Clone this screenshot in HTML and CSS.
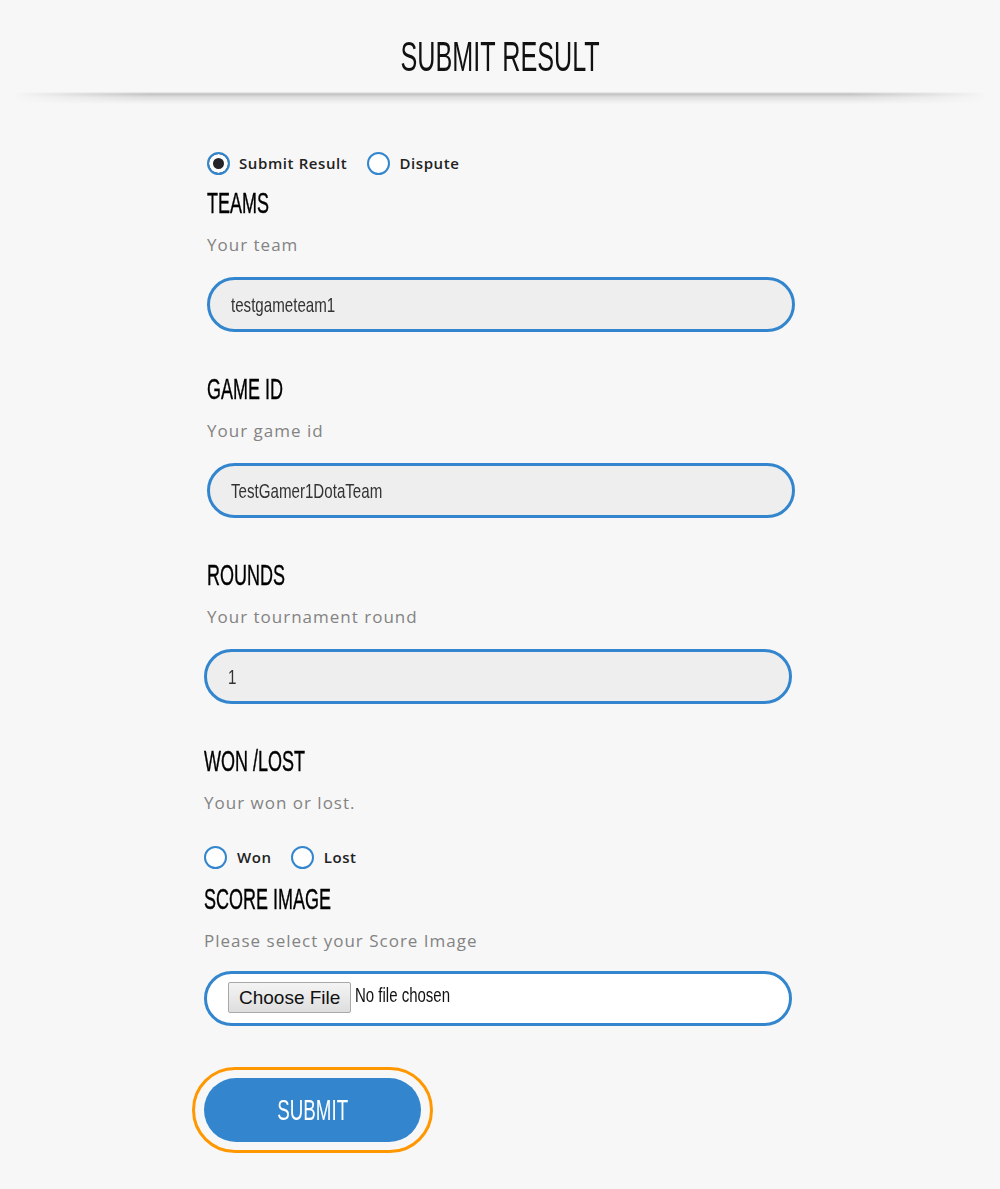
FILE: index.html
```html
<!DOCTYPE html>
<html lang="en">
<head>
<meta charset="utf-8">
<title>Submit Result</title>
<link rel="stylesheet" href="styles.css">
</head>
<body>
<header class="page-header">
  <h1 class="page-title"><span class="cond center">SUBMIT RESULT</span></h1>
</header>
<main class="form-wrap">
  <form class="result-form">
    <div class="radio-row first">
      <label class="radio"><input type="radio" name="mode" checked><span>Submit Result</span></label>
      <label class="radio"><input type="radio" name="mode"><span>Dispute</span></label>
    </div>

    <section class="field">
      <h2 class="field-title"><span class="cond">TEAMS</span></h2>
      <p class="field-desc">Your team</p>
      <div class="pill"><span class="cond value">testgameteam1</span></div>
    </section>

    <section class="field">
      <h2 class="field-title"><span class="cond">GAME ID</span></h2>
      <p class="field-desc">Your game id</p>
      <div class="pill"><span class="cond value">TestGamer1DotaTeam</span></div>
    </section>

    <section class="field">
      <h2 class="field-title"><span class="cond">ROUNDS</span></h2>
      <p class="field-desc">Your tournament round</p>
      <div class="pill pill-shifted"><span class="cond value">1</span></div>
    </section>

    <section class="field shifted">
      <h2 class="field-title"><span class="cond">WON /LOST</span></h2>
      <p class="field-desc">Your won or lost.</p>
      <div class="radio-row small">
        <label class="radio"><input type="radio" name="wl"><span>Won</span></label>
        <label class="radio"><input type="radio" name="wl"><span>Lost</span></label>
      </div>
    </section>

    <section class="field shifted score">
      <h2 class="field-title"><span class="cond">SCORE IMAGE</span></h2>
      <p class="field-desc">Please select your Score Image</p>
      <div class="pill file-pill">
        <span class="file-btn">Choose File</span>
        <span class="cond file-name">No file chosen</span>
      </div>
    </section>

    <div class="submit-wrap">
      <button type="button" class="submit-btn"><span class="cond center">SUBMIT</span></button>
    </div>
  </form>
</main>
</body>
</html>
```

FILE: styles.css
```css
* { box-sizing: border-box; }

html, body {
  margin: 0;
  padding: 0;
  background: #f7f7f7;
}

body {
  font-family: "Open Sans", "DejaVu Sans", sans-serif;
  color: #222;
  min-height: 1189px;
}

.cond {
  display: inline-block;
  font-family: "Liberation Sans", Arial, sans-serif;
  transform: scaleX(0.76);
  transform-origin: 0 50%;
  white-space: nowrap;
}

.cond.center {
  transform-origin: 50% 50%;
}

.page-header {
  position: relative;
  height: 94px;
  text-align: center;
}

.page-header::after {
  content: "";
  position: absolute;
  left: 12px;
  right: 12px;
  top: 92px;
  height: 12px;
  background: linear-gradient(to bottom, rgba(0,0,0,0.02) 0px, rgba(0,0,0,0.22) 2px, rgba(0,0,0,0.1) 5px, rgba(0,0,0,0) 12px);
  -webkit-mask-image: linear-gradient(to right, transparent 0%, #000 14%, #000 86%, transparent 100%);
  mask-image: linear-gradient(to right, transparent 0%, #000 14%, #000 86%, transparent 100%);
}

.page-title {
  margin: 0;
  padding-top: 31px;
  font-weight: 400;
  font-size: 42px;
  line-height: 48px;
  color: #111;
}

.page-title .cond {
  transform: scaleX(0.6);
}

.form-wrap {
  width: 600px;
  margin: 0 auto;
  padding: 58px 0 0 7px;
}

.radio-row {
  display: flex;
  align-items: center;
  gap: 20px;
  height: 22px;
}

.radio {
  display: flex;
  align-items: center;
  gap: 9px;
  font-size: 15px;
  font-weight: 600;
  letter-spacing: 0.6px;
  color: #222;
}

.radio input {
  appearance: none;
  -webkit-appearance: none;
  margin: 0;
  width: 23px;
  height: 23px;
  border: 2px solid #3386ce;
  border-radius: 50%;
  background: #fff;
}

.radio input:checked {
  background: #23252b;
  box-shadow: inset 0 0 0 4px #fff;
}

.field {
  margin-top: 11px;
}

.field + .field {
  margin-top: 39px;
}

.field.shifted {
  margin-left: -3px;
}

.field-title {
  margin: 0;
  font-weight: 400;
  font-size: 29px;
  line-height: 34px;
  color: #000;
}

.field-title .cond {
  transform: scaleX(0.62);
  -webkit-text-stroke: 0.4px #000;
}

.field-desc {
  margin: 13px 0 0;
  font-size: 17px;
  font-weight: 400;
  letter-spacing: 1px;
  line-height: 24px;
  color: #838383;
}

.pill {
  margin-top: 20px;
  width: 588px;
  height: 55px;
  border: 3px solid #3386ce;
  border-radius: 28px;
  background: #eeeeee;
  display: flex;
  align-items: center;
  padding-left: 21px;
  font-size: 21px;
  color: #333;
}

.pill.pill-shifted {
  margin-left: -3px;
}

.pill .value {
  transform: scaleX(0.72);
}

.radio-row.small {
  margin-top: 31px;
  gap: 19px;
}

.radio-row.small .radio {
  gap: 10px;
}

.field.score {
  margin-top: 13px;
}

.field.score .pill {
  margin-top: 18px;
}

.file-pill {
  background: #fff;
  padding-left: 21px;
  color: #111;
}

.file-btn {
  display: inline-block;
  height: 31px;
  padding: 0 10px;
  line-height: 29px;
  border: 1px solid #a8a8a8;
  border-radius: 2px;
  background: linear-gradient(#f4f4f4, #dedede);
  font-family: "Liberation Sans", Arial, sans-serif;
  font-size: 19px;
  color: #111;
  margin-top: -2px;
}

.file-name {
  margin-left: 4px;
  margin-top: -6px;
  font-size: 20px;
  transform: scaleX(0.75);
}

.submit-wrap {
  margin-top: 41px;
  margin-left: -15px;
  width: 241px;
  height: 86px;
  border: 3px solid #ff9800;
  border-radius: 43px;
  padding: 8px 9px;
}

.submit-btn {
  width: 217px;
  height: 64px;
  border: 0;
  border-radius: 32px;
  background: #3386ce;
  color: #fff;
  font-size: 30px;
  padding: 0;
}

.submit-btn .cond {
  transform: scaleX(0.625);
}
```
